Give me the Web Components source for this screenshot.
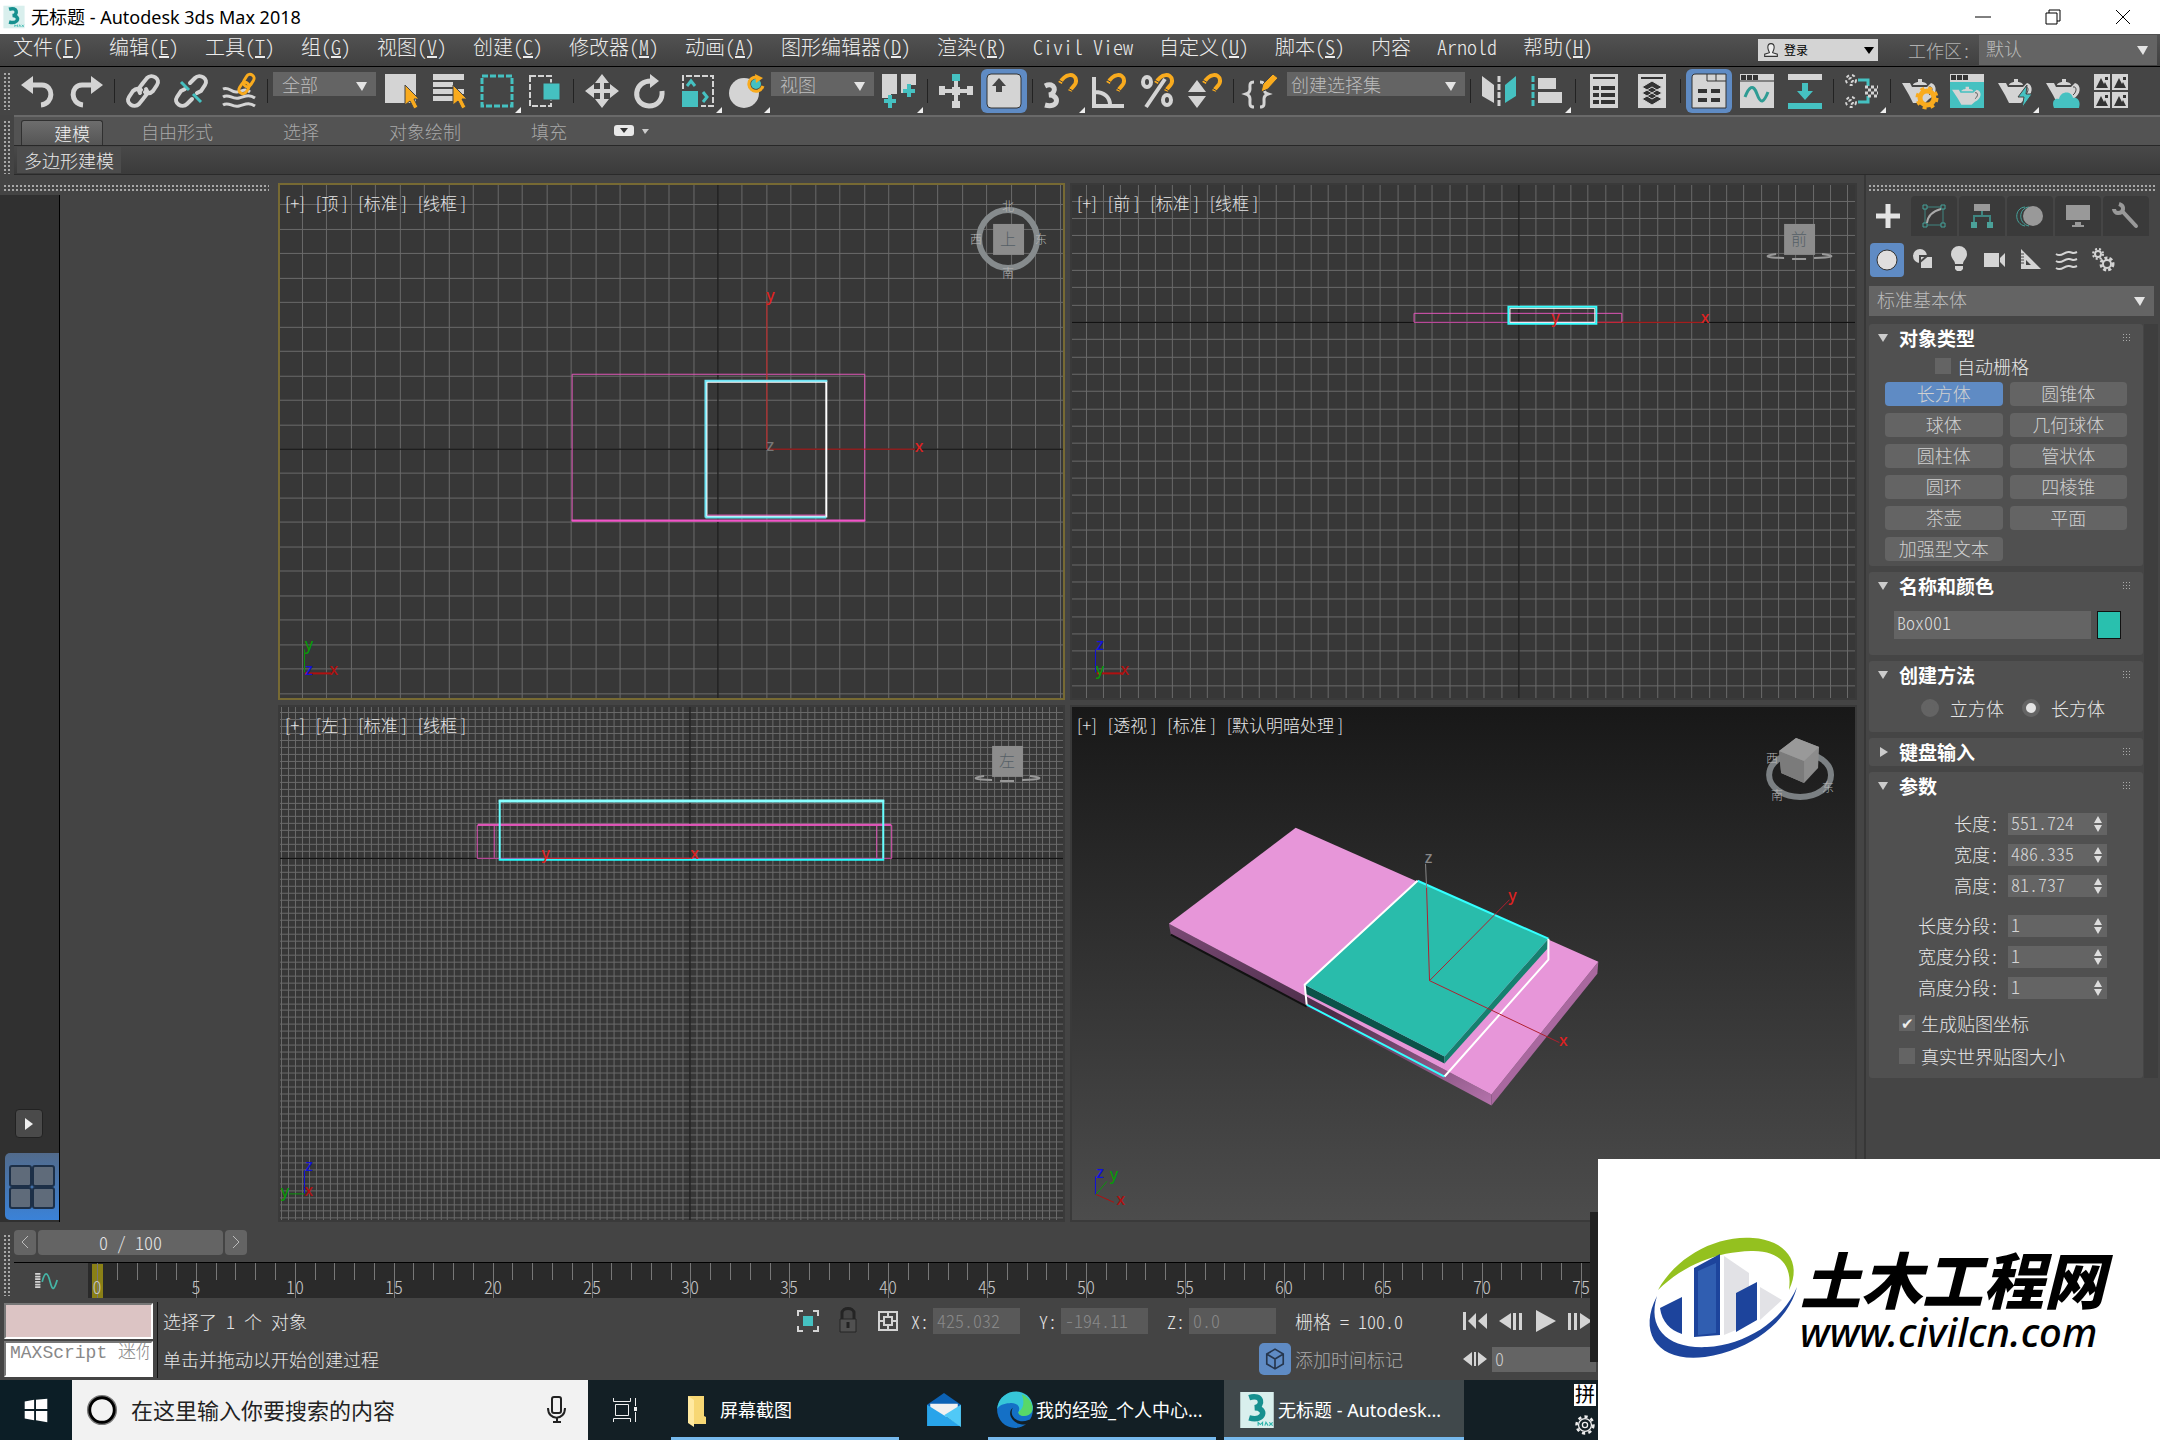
<!DOCTYPE html>
<html lang="zh-CN">
<head>
<meta charset="utf-8">
<title>无标题 - Autodesk 3ds Max 2018</title>
<style>
  :root {
    --font-ui: "Noto Sans CJK SC", sans-serif;
    --font-win: "Noto Sans", "Noto Sans CJK SC", sans-serif;
    --bg: #444;
    --field: #646464;
    --blue: #5f8bc4;
  }

  body {
    margin: 0;
    min-height: 100vh;
    display: flex;
    flex-direction: column;
    background: var(--bg);
    color: #e6e6e6;
    font-family: var(--font-ui);
    font-size: 18px;
    font-weight: 300;
    line-height: 24px;
  }

  main {
    flex: 1;
    display: flex;
  }
</style>
</head>
<body>
  <title-bar>无标题 - Autodesk 3ds Max 2018</title-bar>
  <menu-bar></menu-bar>
  <tool-bar></tool-bar>
  <ribbon-bar></ribbon-bar>
  <main>
    <layout-strip></layout-strip>
    <view-grid></view-grid>
    <command-panel></command-panel>
  </main>
  <time-line></time-line>
  <status-bar></status-bar>
  <task-bar></task-bar>
  <site-mark></site-mark>

<script>
const ICONS = {
  undo: `<path fill="none" stroke="#d4d4d4" stroke-width="5" d="M8 11h13c12 0 12 19-1 20"/><path fill="#d4d4d4" d="M0 11 12 2v18z"/>`,
  redo: `<path fill="none" stroke="#d4d4d4" stroke-width="5" d="M26 11H13C1 11 1 30 14 31"/><path fill="#d4d4d4" d="M34 11 22 2v18z"/>`,
  link: `<g fill="none" stroke="#d4d4d4" stroke-width="4" stroke-linecap="round"><path d="m14 19c-3-4 0-6 3-10l4-5c5-5 14 1 10 7l-4 6c-2 2-5 3-8 1"/><path d="m20 15c3 4 0 6-3 10l-4 5C8 35-1 29 3 23l4-6c2-2 5-3 8-1"/></g>`,
  unlink: `<g fill="none" stroke="#d4d4d4" stroke-width="4" stroke-linecap="round"><path d="m16 9 5-5c5-5 14 1 10 7l-4 6-4 2"/><path d="m18 25-5 5C8 35-1 29 3 23l4-6 4-2"/></g><path stroke="#45c1c1" stroke-width="3" d="m7 8 8 8m4 4 8 8"/>`,
  bind: `<g fill="none" stroke="#d4d4d4" stroke-width="3"><path d="M1 15c6-3 8 4 14 3s8-4 13 0"/><path d="M1 23c6-4 9 3 16 1s10-4 16 0"/><path d="M1 31c6-4 9 3 16 1s10-4 16 0"/></g><g fill="none" stroke="#f9ab1e" stroke-width="3"><rect x="23" y="0" width="8" height="13" rx="4" transform="rotate(32 27 6)"/><rect x="18" y="8" width="8" height="12" rx="4" transform="rotate(32 22 14)"/></g>`,
  select: `<path fill="#d4d4d4" d="M1 0h31v29H1z"/><path fill="#f9ab1e" stroke="#444" d="M21 11v20l5-4 4 8 4-2-4-8h5z"/>`,
  byname: `<path fill="#d4d4d4" d="M1 0h31v6H1zM1 8h20v5H1zM1 15h31v5H1zM1 22h20v5H1z"/><path fill="#f9ab1e" stroke="#444" d="M21 11v20l5-4 4 8 4-2-4-8h5z"/>`,
  region: `<rect x="2" y="2" width="30" height="30" fill="none" stroke="#45c1c1" stroke-width="3" stroke-dasharray="6 2"/>`,
  crossing: `<rect x="2" y="2" width="21" height="30" fill="none" stroke="#d4d4d4" stroke-width="2" stroke-dasharray="6 2"/><path fill="#45c1c1" stroke="#444" d="M15 9h17v17H15z"/>`,
  move: `<path fill="#d4d4d4" d="m17 0 7 9h-5v6h6v-5l9 7-9 7v-5h-6v6h5l-7 9-7-9h5v-6H9v5l-9-7 9-7v5h6V9h-5z"/>`,
  rotate: `<path fill="none" stroke="#d4d4d4" stroke-width="5" d="M20 7c-20-2-22 24-4 25 8 0 14-6 13-15"/><path fill="#d4d4d4" d="m17 0 9 7-9 7z"/>`,
  scale: `<path fill="none" stroke="#d4d4d4" stroke-width="2" stroke-dasharray="6 2" d="M2 15V2h30v30H20"/><path fill="#45c1c1" d="M1 17h16v16H1z"/><path fill="none" stroke="#45c1c1" stroke-width="3" d="m6 12 4-5 4 5m8 6 4 5-4 5"/>`,
  place: `<circle cx="15" cy="19" r="15" fill="#d4d4d4"/><circle cx="27" cy="10" r="8" fill="#444"/><circle cx="27" cy="10" r="5" fill="#45c1c1"/><path fill="none" stroke="#f9ab1e" stroke-width="3" d="M28 3c-12 0-10 16 1 14 3-1 4-2 5-5"/><path fill="#f9ab1e" d="m26 0 8 4-7 5z"/>`,
  pivot: `<path fill="#d4d4d4" d="M0 0h15v20H9v4H0zM19 0h15v11h-8v8h-7z"/><path stroke="#45c1c1" stroke-width="4" d="M8 21v13M2 27h12M27 10v13M21 17h12"/>`,
  manipulate: `<path stroke="#d4d4d4" stroke-width="4" d="M1 17h32M17 6v26"/><path fill="#45c1c1" d="M13 0h8v7h-8z"/><path fill="#d4d4d4" d="M0 12h6v9H0zM28 12h6v9h-6zM13 27h8v7h-8zM13 13h8v8h-8z"/>`,
  keyboard: `<rect x="0" y="0" width="34" height="34" rx="4" fill="#d4d4d4" stroke="#333"/><path fill="#444" d="m12 4 7 8h-4v6H9v-6H5z"/>`,
  snap3: `<path fill="none" stroke="#d4d4d4" stroke-width="5" d="M1 12c10-5 13 7 4 9 11 0 10 14-4 10"/>MAG`,
  angle: `<path fill="none" stroke="#d4d4d4" stroke-width="4" d="M2 3v29h30M3 18c9 0 15 5 15 13"/>MAG`,
  percent: `<path fill="none" stroke="#d4d4d4" stroke-width="4" d="M6 33 25 5M3 8a4 5 0 1 0 8 0 4 5 0 1 0-8 0M23 26a4 5 0 1 0 8 0 4 5 0 1 0-8 0"/>MAG`,
  spinner: `<path fill="#d4d4d4" d="m9 6 9 12H0zM0 22h18L9 34z"/>MAG`,
  braces: `<path fill="none" stroke="#d4d4d4" stroke-width="3" d="M9 8c-5 0-4 3-4 7 0 3-1 4-4 5 3 1 4 2 4 5 0 5-1 8 4 8M15 8c5 0 4 3 4 7 0 3 1 4 4 5-3 1-4 2-4 5 0 5 1 8-4 8"/><path fill="#f9ab1e" stroke="#444" d="m16 18 2-8L28 0l5 4-10 11z"/>`,
  mirror: `<path fill="#d4d4d4" d="m0 2 12 9v18L0 22z"/><path fill="#45c1c1" d="m34 2-11 9v18l11-7z"/><path stroke="#d4d4d4" stroke-width="3" stroke-dasharray="6 2" d="M17 2v30"/>`,
  align: `<path stroke="#45c1c1" stroke-width="3" stroke-dasharray="6 2" d="M3 2v30"/><path fill="#d4d4d4" d="M8 4h18v11H8zM8 18h24v11H8z"/>`,
  list: `<path fill="#d4d4d4" d="M3 0h28v34H3z"/><path stroke="#333" stroke-width="2" d="M6 4h22"/><path stroke="#333" stroke-width="4" d="M6 14h6m2 0h14M6 21h6m2 0h14M6 28h6m2 0h14"/>`,
  layers: `<path fill="#d4d4d4" d="M3 0h28v34H3z"/><path stroke="#333" stroke-width="2" d="M6 4h22"/><path fill="#333" stroke="#d4d4d4" d="m7 25 10-6 10 6-10 6zM7 19l10-6 10 6-10 6zM7 13l10-6 10 6-10 6z"/>`,
  ribbon: `<path fill="#d4d4d4" stroke="#333" d="M0 4c0-3 1-4 4-4h30v34H0z"/><path fill="none" stroke="#333" d="M15 0v7h19M24 0v7"/><path fill="#333" d="M6 15h9v4H6zM19 15h9v4h-9zM6 24h9v4H6zM19 24h9v4h-9z"/>`,
  curve: `<path fill="#d4d4d4" d="M0 0h34v34H0z"/><path stroke="#333" d="M0 7h34"/><path fill="#333" d="M1 1h5v5H1zM7 1h5v5H7zM13 1h5v5h-5z"/><path fill="none" stroke="#2f9c94" stroke-width="3" d="M5 23c4-10 8-14 12-3s7 8 11-2"/>`,
  dope: `<path fill="#d4d4d4" d="M0 0h34v6H0z"/><path fill="#45c1c1" d="M0 29h34v6H0zM14 9h6v8h5l-8 9-8-9h5z"/>`,
  schematic: `<path fill="none" stroke="#45c1c1" stroke-width="3" d="M13 6h10v6M13 28h10v-6"/><g fill="none" stroke="#d4d4d4" stroke-width="2" stroke-dasharray="3 3"><circle cx="6" cy="6" r="5"/><circle cx="6" cy="6" r="2"/><circle cx="6" cy="28" r="5"/><circle cx="6" cy="28" r="2"/></g><path stroke="#d4d4d4" stroke-width="3" stroke-dasharray="3 3" d="M20 13h13M23 16h11M20 19h13M23 22h11"/>`,
  pot: `<path fill="#d4d4d4" d="M0 9h8l2 4h15l4-4c7 2 6 12-2 16l-4 4H11L7 21zM11 11c0-2 4-3 5-3V5h4v3c2 0 5 1 5 3z"/><path fill="none" stroke="#444" d="m27 13c4-1 4 5 0 8"/>`,
  potgear: `POT<circle cx="25" cy="24" r="7" fill="none" stroke="#f9ab1e" stroke-width="5"/><circle cx="25" cy="24" r="10" fill="none" stroke="#f9ab1e" stroke-width="3" stroke-dasharray="4 4"/>`,
  potframe: `<path fill="#45c1c1" d="M0 0h34v34H0z"/><path fill="#d4d4d4" d="M0 0h34v8H0z"/><path fill="#333" d="M1 1h5v5H1zM7 1h5v5H7zM13 1h5v5h-5z"/><g transform="translate(2 9) scale(.85 .75)">POT</g>`,
  potbolt: `POT<path fill="#45c1c1" stroke="#444" d="m29 11-9 12h6l-2 11 10-14h-6z"/>`,
  potcloud: `POT<path fill="#45c1c1" d="M8 34c-3-8 2-10 5-9 2-9 13-8 14-1 5-1 8 4 6 10z"/>`,
  thumbs: `<path fill="#d4d4d4" d="M0 0h16v16H0zM18 0h16v16H18zM0 18h16v16H0zM18 18h16v16H18z"/><path fill="#333" d="m2 14 5-10 3 6 1-2 3 6zM20 14l5-10 3 6 1-2 3 6zM2 32l5-10 3 6 1-2 3 6zM20 32l5-10 3 6 1-2 3 6zM11 3h3v3h-3zM29 3h3v3h-3zM11 21h3v3h-3zM29 21h3v3h-3z"/>`,
  plus: `<path stroke="#e4e4e4" stroke-width="5" d="M17 5v24M5 17h24"/>`,
  modify: `<path fill="none" stroke="#3f8580" stroke-width="1" d="M8 8h18v18H8z"/><path fill="#3b3b3b" stroke="#45a39b" d="M6 6h4v4H6zM24 6h4v4h-4zM6 24h4v4H6zM24 24h4v4h-4z"/><path fill="none" stroke="#aaa" stroke-width="2" d="M10 24c1-8 6-12 14-14"/>`,
  hierarchy: `<path fill="#999" d="M9 5h16v7H9z"/><path fill="none" stroke="#3f8580" stroke-width="2" d="M17 12v5M9 23v-6h16v6"/><path fill="#4ba199" d="M6 23h6v6H6zM22 23h6v6h-6z"/>`,
  motion: `<path fill="none" stroke="#45a39b" d="M12 8c-11 1-11 17 0 19M16 8C5 9 5 25 16 27"/><circle cx="20" cy="17" r="10" fill="#999"/>`,
  display: `<path fill="#999" d="M5 6h24v15H5zM14 23h6v3h3v2H11v-2h3z"/>`,
  wrench: `<path fill="none" stroke="#999" stroke-width="4" stroke-linecap="round" d="m14 13 13 14"/><path fill="none" stroke="#999" stroke-width="4" d="M10 5c6 2 5 9-1 9-2 0-4-2-4-4"/>`,
  sphere: `<circle cx="17" cy="17" r="10" fill="#e0dede" stroke="#333"/>`,
  shapes: `<circle cx="14" cy="13" r="7" fill="#d4d4d4"/><path fill="#d4d4d4" stroke="#444" stroke-width="2" d="M14 13h13v13H14z"/><path stroke="#444" stroke-width="2" d="m14 19 7-6"/>`,
  bulb: `<path fill="#d4d4d4" d="M13 21c0-4-4-5-4-10a8 8 0 0 1 16 0c0 5-4 6-4 10zM13 23h8v3l-2 2h-4l-2-2z"/>`,
  camera: `<path fill="#d4d4d4" d="M6 10h15v14H6zM22 15l5-5v14l-5-5z"/>`,
  helper: `<path fill="#d4d4d4" fill-rule="evenodd" d="m7 6 20 20H7zM12 17v5h5z"/><path stroke="#444" stroke-width="1" d="M7 11h3M7 14h3M7 17h3M7 20h3"/>`,
  waves: `<path fill="none" stroke="#d4d4d4" stroke-width="2" d="M6 11c6 4 8-3 13-2s4 2 8 0M6 18c6 4 8-3 13-2s4 2 8 0M6 25c6 4 8-3 13-2s4 2 8 0"/>`,
  gears: `<g fill="none" stroke="#d4d4d4"><circle cx="12" cy="11" r="3" stroke-width="2"/><circle cx="12" cy="11" r="5" stroke-width="2" stroke-dasharray="2 2"/><circle cx="21" cy="21" r="4" stroke-width="2"/><circle cx="21" cy="21" r="6" stroke-width="3" stroke-dasharray="3 2"/></g>`,
  max: `<path fill="#d9efed" d="M2 1h30v32H2z"/><path fill="none" stroke="#16908f" stroke-width="5" d="M10 6c12-4 13 8 5 9 11 0 9 13-5 9"/><path fill="none" stroke="#2cb4aa" stroke-width="1" d="M18 31v-3l2 2 2-2v3m2 0 1-3 2 3m1-3 3 3m0-3-3 3"/>`,
  isolate: `<path fill="none" stroke="#d4d4d4" stroke-width="2" d="M7 12V7h5m10 0h5v5m0 10v5h-5m-10 0H7v-5"/><path fill="#45c1c1" d="M12 12h10v10H12z"/>`,
  lock: `<path fill="none" stroke="#242424" stroke-width="3" d="M11 15V9c0-6 12-6 12 0v6"/><path fill="#505050" stroke="#242424" d="M9 15h16v13H9z"/><path stroke="#222" stroke-width="3" d="M17 18v6"/>`,
  absolute: `<path fill="none" stroke="#d4d4d4" stroke-width="2" d="M8 8h18v18H8zM17 8v5m0 8v5M8 17h5m8 0h5M13 13h8v8h-8z"/>`,
  cube: `<path fill="none" stroke="#26364d" stroke-width="2" d="m17 5 10 6v12l-10 6-10-6V11zM7 11l10 6 10-6M17 17v12"/>`,
  first: `<path fill="#d4d4d4" d="M5 8h3v18H5zM18 9v16l-8-8zM29 9v16l-9-8z"/>`,
  prev: `<path fill="#d4d4d4" d="M18 9v16L6 17zM20 9h3v17h-3zM26 9h3v17h-3z"/>`,
  play: `<path fill="#d4d4d4" d="m8 6 20 11L8 28z"/>`,
  next: `<path fill="#d4d4d4" d="M5 9h3v17H5zM11 9h3v17h-3zM17 9l12 8-12 8z"/>`,
  keymode: `<path fill="#d4d4d4" d="m5 17 9-7v14zM29 17l-9-7v14zM16 10h2v14h-2z"/>`,
  keys: `<path stroke="#d4d4d4" stroke-width="6" stroke-dasharray="2 1" d="M2 8v18"/><path fill="none" stroke="#45b5a6" stroke-width="2" d="M7 18c3-12 6-12 9 0s5 8 8-2"/>`,
  win: `<path fill="#fff" d="m5 8 10-2v10H5zM17 6l12-1v11H17zM5 18h10v10L5 26zM17 18h12v12l-12-2z"/>`,
  ring: `<circle cx="17" cy="17" r="14" fill="none" stroke="#777" stroke-width="4"/><circle cx="17" cy="17" r="13" fill="none" stroke="#000" stroke-width="3"/>`,
  mic: `<rect x="12" y="4" width="9" height="16" rx="2" fill="none" stroke="#222" stroke-width="2"/><path fill="none" stroke="#222" stroke-width="2" d="M8 15c0 13 17 13 17 0M17 25v4m-4 0h8"/>`,
  taskview: `<g fill="none" stroke="#eee" stroke-width="1"><path d="M7.500 11.500h13v11h-13zM5.500 5v3.500h17V5M5.500 29v-3.500h17V29M27.500 5v8m0 6v10"/></g><path fill="#eee" d="M26 14h3v4h-3z"/>`,
  folder: `<path fill="#f7d774" d="M9 3h16v20l2 1v7H14z"/><path fill="#ffe9a0" d="m9 3 6 4v27l-6-4z"/>`,
  mail: `<path fill="#0c62b5" d="m1 12 16-11 16 11v5H1z"/><path fill="#f1f1f1" d="M4 11h26v6L17 25 4 17z"/><path fill="#28a4ea" d="m1 12 32 20H1z"/><path fill="#50c9f7" d="M33 12v21L17 22z"/>`,
  edge: `<circle cx="17" cy="17" r="16" fill="#1470c6"/><path fill="#36c6d8" d="M1 16C3-4 31-5 33 14c0 9-12 10-13 5 3-6-3-9-8-8-5 0-9 2-11 5z"/><path fill="#58d868" d="M23 3c9 4 11 12 9 16-4 5-12 4-12 0 6-4 5-11 3-16z"/><path fill="#131f25" d="M15 15c-4 8 5 15 14 11l3-1-5 5c-12 1-18-10-12-15z"/>`,
  gear: `<circle cx="17" cy="17" r="4" fill="none" stroke="#eee" stroke-width="2"/><circle cx="17" cy="17" r="10" fill="none" stroke="#eee" stroke-width="2"/><circle cx="17" cy="17" r="13" fill="none" stroke="#eee" stroke-width="4" stroke-dasharray="5 5"/>`,
  user: `<path fill="#eee" stroke="#333" stroke-width="2" d="M11 12a6 7 0 0 1 12 0c0 5-3 8-3 10l9 3v4H5v-4l9-3c0-2-3-5-3-10z"/>`
};

const MAGNET = `<path fill="none" stroke="#f9ab1e" stroke-width="4" d="M16 9c5-10 15-10 16-3 1 5-4 6-6 11"/><path stroke="#444" stroke-width="1" d="m15 6 5 3m4 5 5 3"/>`;

const icon = (name, size = 34) =>
  `<svg viewBox="0 0 34 34" width="${size}" height="${size}" aria-hidden="true">${ICONS[name]
    .replace("MAG", MAGNET)
    .replace("POT", ICONS.pot)}</svg>`;

// shared by every shadow root
const RESET = `
  :host, * { box-sizing: border-box; }
  svg { display: block; flex: none; overflow: visible; }
  button, input, select {
    margin: 0; padding: 0; border: 0; border-radius: 0;
    font: inherit; color: inherit; background: none;
    appearance: none; outline: none;
  }
  button { display: flex; align-items: center; justify-content: center; }
  .half { font-feature-settings: "hwid"; }
  .dots { background: radial-gradient(#a8a8a8 1px, transparent 1px) 0 0 / 4px 4px; }
`;

class BaseElement extends HTMLElement {
  constructor() {
    super();
    this.attachShadow({ mode: "open" });
  }

  connectedCallback() {
    this.shadowRoot.innerHTML = `<style>${RESET}${this.css()}</style>${this.html()}`;
  }
}

class TitleBar extends BaseElement {
  css() {
    return `
      :host { display: flex; align-items: center; height: 34px; padding: 0 2px; background: #fff; color: #000; font-family: var(--font-win); font-weight: 400; }
      h1 { flex: 1; margin: 0 0 0 5px; font-size: 18px; font-weight: 400; }
      button { width: 70px; height: 34px; }
      button path, button rect { fill: none; stroke: #000; }
    `;
  }

  html() {
    return `
      ${icon("max", 24)}
      <h1><slot></slot></h1>
      <button aria-label="最小化"><svg width="16" height="16"><path d="M0 8h16"/></svg></button>
      <button aria-label="还原"><svg width="16" height="16"><path d="M1 4h11v11H1zM4 4V1h11v11h-3"/></svg></button>
      <button aria-label="关闭"><svg width="16" height="16"><path d="m1 1 14 14m0-14L1 15"/></svg></button>
    `;
  }
}

class DropDown extends BaseElement {
  css() {
    return `
      :host { display: grid; align-items: center; height: 24px; background: var(--field); color: #bcbcbc; }
      select, svg { grid-area: 1 / 1; }
      select { width: 100%; height: 100%; padding: 0 0 4px var(--inset, 9px); font-weight: 300; }
      svg { justify-self: end; margin-right: 9px; fill: #e4e4e4; pointer-events: none; }
    `;
  }

  html() {
    return `
      <select class="half" aria-label="${this.getAttribute("label")}"><option>${this.getAttribute("value")}</option></select>
      <svg width="11" height="9"><path d="M0 0h11L6 9z"/></svg>
    `;
  }
}

class MenuBar extends BaseElement {
  css() {
    return `
      :host { display: flex; justify-content: space-between; height: 33px; padding-right: 3px; border-bottom: 1px solid #000; background: linear-gradient(#525252, #404040); }
      nav { display: flex; gap: 26px; padding-left: 13px; font-size: 20px; line-height: 26px; }
      a { color: #ececec; text-decoration: none; white-space: nowrap; }
      .tools { display: flex; align-items: center; gap: 8px; color: #b0b0b0; }
      .login { display: flex; align-items: center; gap: 4px; width: 120px; height: 22px; margin-right: 22px; padding-left: 4px; background: #d4d4d4; color: #000; font-size: 12px; font-weight: 400; }
      .login select { flex: 1; }
      .workspace { width: 178px; height: 30px; --inset: 7px; }
    `;
  }

  html() {
    const items = ["文件(F)", "编辑(E)", "工具(T)", "组(G)", "视图(V)", "创建(C)", "修改器(M)", "动画(A)", "图形编辑器(D)", "渲染(R)", "Civil View", "自定义(U)", "脚本(S)", "内容", "Arnold", "帮助(H)"];
    const links = items.map(t => `<a href="#">${t.replace(/\((.)\)/, "(<u>$1</u>)")}</a>`).join("");
    return `
      <nav class="half">${links}</nav>
      <div class="tools">
        <div class="login">${icon("user", 18)}<select aria-label="登录"><option>登录</option></select><svg width="14" height="7"><path d="M0 0h10L5 7z"/></svg></div>
        <span class="half">工作区:</span>
        <drop-down class="workspace" label="工作区" value="默认"></drop-down>
      </div>
    `;
  }
}

class ToolBar extends BaseElement {
  css() {
    return `
      :host { display: flex; height: 48px; align-items: center; background: #454545; }
      .dots { width: 7px; height: 38px; margin: 0 4px 0 3px; }
      button { position: relative; width: 48px; height: 44px; }
      button.on { width: 46px; margin: 0 1px; border-radius: 6px; background: var(--blue); }
      button.more::after { content: ""; position: absolute; right: 0; bottom: 0; border: 3px solid transparent; border-right-color: #eee; border-bottom-color: #eee; }
      hr { width: 1px; height: 24px; margin: 0 4px; border: 0; background: #222; }
      drop-down { width: 103px; align-self: flex-start; margin: 5px 1px 0; }
      drop-down.wide { width: 178px; --inset: 4px; }
    `;
  }

  html() {
    const row = "undo redo | link unlink bind | 全部 select byname region+ crossing | move rotate scale+ place+ 视图 pivot+ | manipulate keyboard! | snap3+ angle percent spinner | braces 创建选择集 | mirror align+ | list layers | ribbon! curve dope | schematic+ | potgear potframe potbolt+ potcloud thumbs";
    return `<div class="dots"></div>` + row.split(" ").map(t => {
      if (t === "|") return "<hr>";
      if (!/^\w/.test(t)) return `<drop-down class="${t.length > 2 ? "wide" : ""}" label="${t}" value="${t}"></drop-down>`;
      const name = t.replace(/[+!]/, "");
      return `<button class="${t.endsWith("+") ? "more" : t.endsWith("!") ? "on" : ""}" aria-label="${name}">${icon(name)}</button>`;
    }).join("");
  }
}

class RibbonBar extends BaseElement {
  css() {
    return `
      :host { display: flex; height: 60px; }
      .dots { width: 7px; height: 54px; margin: 5px 4px 0 3px; }
      .body { flex: 1; border-top: 2px solid #696969; }
      .tabs { display: flex; align-items: center; gap: 70px; height: 29px; padding-left: 7px; border-bottom: 1px solid #282828; background: #535353; }
      button { height: 28px; color: #a8a8a8; font-weight: 300; }
      .tabs .on { width: 82px; height: 25px; align-self: flex-end; justify-content: flex-end; padding-right: 12px; margin-right: -32px; border: 1px solid #303030; border-bottom: 0; border-radius: 3px 3px 0 0; background: linear-gradient(#6d6d6d, #555); color: #f0f0f0; }
      .tabs svg { margin-left: -23px; }
      .panel { height: 29px; padding: 1px 3px; border-bottom: 1px solid #2a2a2a; background: linear-gradient(#494949, #3b3b3b); }
      .panel button { width: 104px; height: 26px; background: #4c4c4c; color: #e8e8e8; }
    `;
  }

  html() {
    return `
      <div class="dots"></div>
      <div class="body">
        <div class="tabs">
          <button class="on">建模</button><button>自由形式</button><button>选择</button><button>对象绘制</button><button>填充</button>
          <svg width="36" height="12"><rect width="20" height="11" rx="3" fill="#e8e8e8"/><path fill="#333" d="M6 3h8l-4 5z"/><path fill="#ccc" d="M28 4h7l-4 5z"/></svg>
        </div>
        <div class="panel"><button>多边形建模</button></div>
      </div>
    `;
  }
}

class LayoutStrip extends BaseElement {
  css() {
    return `
      :host { display: flex; flex-direction: column; width: 278px; padding-top: 9px; }
      .dots { height: 8px; margin: 0 9px 3px 3px; }
      .strip { flex: 1; display: flex; flex-direction: column; align-items: flex-end; justify-content: flex-end; gap: 15px; width: 60px; padding-bottom: 2px; border-right: 1px solid #000; background: #303030; }
      .play { width: 28px; height: 29px; margin-right: 16px; border: 1px solid #222; border-radius: 4px; background: #4a4a4a; }
      .quad { width: 54px; height: 67px; border-radius: 5px 0 0 5px; background: linear-gradient(#526b8c, #3a82d8); }
    `;
  }

  html() {
    return `
      <div class="dots"></div>
      <div class="strip">
        <button class="play" aria-label="展开"><svg width="8" height="12"><path fill="#eee" d="m0 0 8 6-8 6z"/></svg></button>
        <button class="quad" aria-label="四视图"><svg width="46" height="44"><g fill="#5f6b7a" stroke="#1d3048" stroke-width="2"><rect x="1" y="1" width="21" height="20" rx="2"/><rect x="24" y="1" width="21" height="20" rx="2"/><rect x="1" y="23" width="21" height="20" rx="2"/><rect x="24" y="23" width="21" height="20" rx="2"/></g></svg></button>
      </div>
    `;
  }
}

// Lines of a home grid through the world origin (ox, oy).
function gridLines(ox, oy, step, width, height) {
  let d = "";
  for (let i = -Math.floor(ox / step); ox + i * step < width; i++) d += `M${Math.round(ox + i * step)} 0V${height}`;
  for (let i = -Math.floor(oy / step); oy + i * step < height; i++) d += `M0 ${Math.round(oy + i * step)}H${width}`;
  return `<g transform="translate(.5 .5)"><path stroke="#6a6a6a" d="${d}"/><path stroke="#000" d="M${Math.round(ox)} 0V${height}M0 ${Math.round(oy)}H${width}"/></g>`;
}

const axis = (letter, x, y, color) => `<text x="${x}" y="${y}" fill="${color}">${letter}</text>`;

const flatCube = label => `
  <path fill="none" stroke="#999" stroke-width="2" d="M707 71c-14 2-10 4 8 4m8 1h14m8-1c18 0 24-2 8-4"/>
  <path fill="#8c8c8c" d="M715 41h31v31h-31z"/><text class="cube" x="730" y="62">${label}</text>`;

const SCENES = {
  top: `${gridLines(440, 266, 24.47, 788, 518)}
    <g fill="none">
      <path stroke="#e055b8" d="M294.5 191.5h293v147h-293z"/><path stroke="#f055c8" stroke-width="2" d="M294 338h294"/>
      <path stroke="#c82020" d="M489.5 118v148.5H638"/>
      <path stroke="#fff" stroke-width="2" d="M429 199h120v135H429z"/><path stroke="#6fe4f4" stroke-width="2" d="M428 335V198h122M428 335h121"/>
      <path stroke="#e055b8" d="M430 332.5h118"/>
      <path stroke="#0a960a" d="M26.5 467v23"/><path stroke="#b01010" stroke-width="2" d="M27 491h26"/>
    </g>
    ${axis("y", 493, 118, "#d22")}${axis("x", 642, 269, "#d22")}${axis("z", 493, 268, "#777")}
    ${axis("y", 31, 468, "#0a960a")}${axis("z", 31, 493, "#11d")}${axis("x", 56, 493, "#b01010")}
    <circle cx="731" cy="56" r="29" fill="none" stroke="#868b8d" stroke-width="6"/>
    <path fill="#8c8c8c" d="M716 41h31v31h-31z"/><text class="cube" x="731" y="62">上</text>
    <g class="compass"><text x="731" y="28">北</text><text x="731" y="95">南</text><text x="699" y="61">西</text><text x="764" y="61">东</text></g>`,
  front: `${gridLines(449, 139, 17.33, 788, 518)}
    <g fill="none">
      <path stroke="#e055b8" d="M344.5 130.5h208v9h-208z"/><path stroke="#c82020" d="M526 139.5h109"/>
      <path stroke="#3ff" stroke-width="2" d="M439 124h88v17h-88z"/><path stroke="#fff" d="M440.5 125.5h85v14h-85z"/>
      <path stroke="#11d" d="M25.5 467v23"/><path stroke="#b01010" stroke-width="2" d="M27 491h26"/>
    </g>
    ${axis("y", 486, 140, "#d22")}${axis("x", 636, 140, "#d22")}
    ${axis("z", 30, 468, "#11d")}${axis("y", 30, 493, "#0a960a")}${axis("x", 55, 493, "#b01010")}
    ${flatCube("前")}`,
  left: `${gridLines(412, 153, 6.93, 788, 518)}
    <g fill="none">
      <path stroke="#e055b8" d="M199.5 120.5h415v33h-415zM216.5 120v33M599.5 120v33"/><path stroke="#e055b8" stroke-width="2" d="M200 120h414"/>
      <path stroke="#6ff" stroke-width="2" d="M222 154V96h384v58"/><path stroke="#8ff" stroke-width="3" d="M221 96h386"/><path stroke="#2ff" stroke-width="2" d="M221 155h386"/>
      <path stroke="#c82020" d="M268 153.5h145"/>
      <path stroke="#11d" d="M26.5 466v23"/><path stroke="#0a960a" d="M11 489.5h15"/>
    </g>
    ${axis("y", 268, 154, "#d22")}${axis("x", 417, 154, "#d22")}
    ${axis("z", 31, 467, "#11d")}${axis("y", 7, 493, "#0a960a")}${axis("x", 31, 492, "#b01010")}
    ${flatCube("左")}`,
  persp: `
    <defs><linearGradient id="side" x2="1" y2="1"><stop stop-color="#7a4a75"/><stop offset=".5" stop-color="#4a2c47"/><stop offset="1" stop-color="#b573ac"/></linearGradient></defs>
    <path fill="url(#side)" d="m99 219 2 11 321 171V390z"/><path fill="none" stroke="#111" stroke-width="2" d="m101 230 136 72"/>
    <path fill="#a9689f" d="m422 390 107-133-1 12-106 132z"/>
    <path fill="#e796d9" d="m226 123 303 134-107 133L99 219z"/>
    <path fill="#0b5248" d="m235 280 1 9 139 70v-7z"/><path fill="#15806f" d="m375 352 104-118-1 10-103 115z"/>
    <path fill="#29bcab" d="m348 176 131 58-104 118-140-72z"/>
    <g fill="none">
      <path stroke="#3ff" stroke-width="2" d="m348 176 131 58M237 300l138 72"/>
      <path stroke="#fff" stroke-width="2" d="m348 176-113 104 2 20M479 234v21L375 372"/>
      <path stroke="#888" d="m356 159 1 24"/><path stroke="#b02030" d="m357 183 3 93 80-81M360 276l130 62"/>
      <path stroke="#11d" d="M25.5 472v18"/><path stroke="#0a960a" d="m26 490 11-13"/><path stroke="#b01010" d="m26 490 18 8"/>
    </g>
    ${axis("z", 359, 158, "#888")}${axis("y", 443, 196, "#d22")}${axis("x", 494, 341, "#d22")}
    ${axis("z", 30, 474, "#11d")}${axis("y", 44, 476, "#0a960a")}${axis("x", 51, 501, "#b01010")}
    <ellipse cx="731" cy="70" rx="31" ry="22" fill="none" stroke="#7b8083" stroke-width="6"/>
    <path fill="#8c8c8c" d="m727 33 23 9-1 21-14 15-23-10-2-22z"/><path fill="#7b7b7b" d="m710 46 25 10v22l-23-10z"/><path fill="#999" d="m727 33 23 9-15 14-25-10z"/>
    <g class="compass"><text x="703" y="58">西</text><text x="708" y="95">南</text><text x="759" y="87">东</text></g>`
};

class ViewPort extends BaseElement {
  css() {
    return `
      :host { position: relative; display: block; overflow: hidden; background: #373737; border: 2px solid #3a3a3a; }
      :host([active]) { border-color: #776a33; }
      :host([scene="persp"]) { background: linear-gradient(#181818, #4c4c4c); }
      svg { position: absolute; inset: -2px; width: calc(100% + 4px); height: calc(100% + 4px); }
      text { font: 500 16px "Noto Sans", sans-serif; text-anchor: middle; }
      .cube { font: 300 16px var(--font-ui); fill: #555f66; }
      .compass text { font: 300 12px var(--font-ui); fill: #b8b8b8; }
      .labels { position: relative; display: flex; gap: 11px; padding: 6px 5px; font-size: 17px; white-space: nowrap; }
    `;
  }

  html() {
    const labels = this.getAttribute("labels").split(",");
    return `
      <svg viewBox="0 0 788 518" preserveAspectRatio="xMinYMin slice">${SCENES[this.getAttribute("scene")]}</svg>
      <div class="labels"><span>[+]</span>${labels.map(t => `<span>[${t} ]</span>`).join("")}</div>
    `;
  }
}

class ViewGrid extends BaseElement {
  css() {
    return `:host { flex: 1; display: grid; grid-template: 1fr 1fr / 1fr 1fr; gap: 5px; padding: 8px 7px 0 0; }`;
  }

  html() {
    return `
      <view-port active scene="top" labels="顶,标准,线框"></view-port>
      <view-port scene="front" labels="前,标准,线框"></view-port>
      <view-port scene="left" labels="左,标准,线框"></view-port>
      <view-port scene="persp" labels="透视,标准,默认明暗处理"></view-port>
    `;
  }
}

class RollOut extends BaseElement {
  css() {
    return `
      :host { display: block; border-radius: 3px; background: #505050; }
      h2 { display: flex; align-items: center; gap: 10px; height: 28px; margin: 0; padding: 0 11px 1px 9px; color: #fff; font-size: 19px; font-weight: 700; }
      h2 span { flex: 1; }
      i { width: 10px; height: 10px; background: radial-gradient(#aaa 1px, transparent 1px) 0 0 / 3px 3px; }
    `;
  }

  html() {
    const arrow = this.hasAttribute("closed") ? "m2 1 8 5-8 5z" : "M0 2h10L5 10z";
    return `
      <h2><svg width="11" height="12"><path fill="#ccc" d="${arrow}"/></svg><span>${this.getAttribute("heading")}</span><i></i></h2>
      <slot></slot>
    `;
  }
}

class SpinField extends BaseElement {
  css() {
    return `
      :host { display: flex; align-items: center; justify-content: flex-end; gap: 9px; height: 22px; }
      label { padding-bottom: 2px; }
      .box { display: flex; align-items: center; width: 99px; height: 22px; padding: 0 5px 0 3px; background: var(--field); }
      input { flex: 1; min-width: 0; height: 22px; padding-bottom: 5px; color: #d4d4d4; }
    `;
  }

  html() {
    const label = this.getAttribute("label");
    return `
      <label class="half" for="value">${label}:</label>
      <span class="box"><input id="value" class="half" value="${this.getAttribute("value")}"><svg width="8" height="16"><path fill="#ddd" d="m4 0 4 7H0zM0 9h8l-4 7z"/></svg></span>
    `;
  }
}

class CommandPanel extends BaseElement {
  css() {
    return `
      :host { width: 296px; padding-top: 9px; border-left: 2px solid #373737; background: #454545; }
      .dots { height: 8px; margin: 0 4px 4px 2px; }
      .tabs { display: flex; gap: 2px; height: 40px; }
      .tabs button { width: 46px; border-radius: 4px 4px 0 0; background: #3a3a3a; }
      .tabs .on { width: 43px; background: none; }
      .kinds { display: flex; gap: 2px; padding: 7px 4px 9px; }
      .kinds button { width: 34px; height: 34px; border-radius: 4px; }
      .kinds .on { background: var(--blue); }
      drop-down { height: 30px; margin: 0 6px 8px 3px; --inset: 8px; }
      .stack { display: flex; flex-direction: column; gap: 6px; margin-right: 2px; padding: 0 15px 0 3px; background: linear-gradient(90deg, transparent 278px, #3e3e3e 278px); }
      label { display: flex; align-items: center; gap: 6px; white-space: nowrap; }
      input[type="checkbox"] { display: grid; place-items: center; width: 16px; height: 16px; background: var(--field); }
      input[type="checkbox"]:checked::after { content: "✔"; color: #eee; font-size: 15px; line-height: 16px; }
      input[type="radio"] { width: 18px; height: 18px; border: 4px solid var(--field); border-radius: 9px; background: var(--field); }
      input[type="radio"]:checked { background: #e4e4e4; }
      .auto { justify-content: center; height: 27px; padding-right: 48px; }
      .objects { display: grid; grid-template-columns: 1fr 1fr; gap: 7px; padding: 3px 16px 5px; }
      .objects button { height: 24px; padding-bottom: 2px; border-radius: 4px; background: var(--field); color: #d0d0d0; font-weight: 300; }
      .objects .on { background: var(--blue); }
      .name { display: flex; gap: 6px; padding: 11px 22px 16px 25px; }
      .name input { flex: 1; min-width: 0; height: 28px; padding: 0 0 6px 3px; background: var(--field); color: #ddd; }
      .name button { width: 24px; height: 28px; border: 1px solid #111; background: #29c0ae; }
      .method { display: flex; gap: 18px; height: 43px; padding: 0 0 5px 52px; }
      .method label { gap: 11px; }
      .params { display: flex; flex-direction: column; gap: 9px; padding: 13px 36px 12px 0; }
      .params .second { margin-top: 9px; }
      .maps { display: flex; flex-direction: column; gap: 9px; padding: 0 0 10px 30px; }
    `;
  }

  html() {
    const tabs = ["plus", "modify", "hierarchy", "motion", "display", "wrench"];
    const kinds = ["sphere", "shapes", "bulb", "camera", "helper", "waves", "gears"];
    const objects = ["长方体", "圆锥体", "球体", "几何球体", "圆柱体", "管状体", "圆环", "四棱锥", "茶壶", "平面", "加强型文本"];
    const on = i => (i ? "" : "on");
    return `
      <div class="dots"></div>
      <div class="tabs">${tabs.map((t, i) => `<button class="${on(i)}" aria-label="${t}">${icon(t)}</button>`).join("")}</div>
      <div class="kinds">${kinds.map((t, i) => `<button class="${on(i)}" aria-label="${t}">${icon(t)}</button>`).join("")}</div>
      <drop-down label="类别" value="标准基本体"></drop-down>
      <div class="stack">
        <roll-out heading="对象类型">
          <label class="auto"><input type="checkbox">自动栅格</label>
          <div class="objects">${objects.map((t, i) => `<button class="${on(i)}">${t}</button>`).join("")}</div>
        </roll-out>
        <roll-out heading="名称和颜色">
          <div class="name"><input class="half" aria-label="名称" value="Box001"><button aria-label="颜色"></button></div>
        </roll-out>
        <roll-out heading="创建方法">
          <div class="method"><label><input type="radio" name="method">立方体</label><label><input type="radio" name="method" checked>长方体</label></div>
        </roll-out>
        <roll-out heading="键盘输入" closed></roll-out>
        <roll-out heading="参数">
          <div class="params">
            <spin-field label="长度" value="551.724"></spin-field>
            <spin-field label="宽度" value="486.335"></spin-field>
            <spin-field label="高度" value="81.737"></spin-field>
            <spin-field class="second" label="长度分段" value="1"></spin-field>
            <spin-field label="宽度分段" value="1"></spin-field>
            <spin-field label="高度分段" value="1"></spin-field>
          </div>
          <div class="maps">
            <label><input type="checkbox" checked>生成贴图坐标</label>
            <label><input type="checkbox">真实世界贴图大小</label>
          </div>
        </roll-out>
      </div>
    `;
  }
}

class TimeLine extends BaseElement {
  css() {
    return `
      :host { display: flex; height: 76px; }
      .dots { width: 7px; height: 62px; margin: 12px 4px 0 3px; }
      .body { flex: 1; min-width: 0; }
      .slider { display: flex; gap: 2px; height: 40px; padding: 8px 0 7px; }
      .slider button { width: 22px; padding-bottom: 2px; border-radius: 4px; background: var(--field); font-weight: 300; }
      .slider .frame { width: 185px; }
      .track { display: flex; height: 36px; border-top: 1px solid #000; }
      .keys { width: 74px; }
      .ruler { flex: 1; overflow: hidden; background: #2a2a2a; }
      text { fill: #c4c4c4; text-anchor: middle; font-size: 18px; }
    `;
  }

  html() {
    let ticks = "";
    let labels = "";
    for (let i = 0; i <= 75; i++) {
      const x = Math.round(9 + i * 19.78);
      ticks += `M${x} 0v${i % 5 ? 17 : 36}`;
      if (i % 5 === 0) labels += `<text x="${x}" y="31" class="half">${i}</text>`;
    }
    return `
      <div class="dots"></div>
      <div class="body">
        <div class="slider">
          <button aria-label="上一帧"><svg width="8" height="12"><path fill="none" stroke="#bbb" d="M7 0 1 6l6 6"/></svg></button>
          <button class="frame half">0 / 100</button>
          <button aria-label="下一帧"><svg width="8" height="12"><path fill="none" stroke="#bbb" d="m1 0 6 6-6 6"/></svg></button>
        </div>
        <div class="track">
          <button class="keys" aria-label="迷你曲线编辑器">${icon("keys", 30)}</button>
          <div class="ruler"><svg width="100%" height="36"><rect x="4" y="1" width="11" height="35" fill="#8a8016"/><path stroke="#777" transform="translate(.5 0)" d="${ticks}"/>${labels}</svg></div>
        </div>
      </div>
    `;
  }
}

class StatusBar extends BaseElement {
  css() {
    return `
      :host { display: flex; height: 82px; padding: 4px 0 0 4px; }
      .script { display: flex; flex-direction: column; gap: 2px; width: 149px; padding-top: 1px; }
      .script input { width: 149px; height: 36px; border: 2px solid #fff; border-top-color: #777; border-left-color: #777; background: #dcc4c4; }
      .script input + input { padding: 0 2px 12px 4px; background: #fff; color: #888; font-family: "Liberation Mono", "Noto Sans CJK SC", monospace; font-weight: 300; }
      .script input::placeholder { color: #888; opacity: 1; }
      hr { width: 1px; height: 76px; margin: 0 5px 0 4px; border: 0; background: #111; }
      .prompt { flex: 0 0 628px; }
      p { margin: 7px 0 14px; }
      .coords { width: 666px; }
      .row { display: flex; align-items: center; height: 38px; }
      .row label { display: flex; align-items: center; gap: 4px; margin-right: 19px; }
      .row label input { width: 87px; height: 26px; padding: 0 0 2px 4px; background: #595959; color: #888; }
      .row svg { margin-right: 6px; }
      .row .half { white-space: nowrap; }
      .row button svg { margin: 0; }
      .tag { justify-content: flex-end; gap: 4px; padding-right: 54px; color: #aaa; }
      .tag button { width: 32px; height: 32px; border-radius: 5px; background: var(--blue); }
      .play { display: flex; flex-direction: column; }
      .play .row button { width: 35px; height: 34px; }
      .play .row input { width: 104px; height: 25px; padding: 0 0 2px 3px; background: var(--field); color: #ccc; }
    `;
  }

  html() {
    return `
      <div class="script"><input aria-label="宏录制器"><input aria-label="侦听器" placeholder="MAXScript 迷你侦听器"></div>
      <hr>
      <div class="prompt"><p class="half">选择了 1 个 对象</p><p>单击并拖动以开始创建过程</p></div>
      <div class="coords">
        <div class="row">
          ${icon("isolate", 34)}${icon("lock", 34)}${icon("absolute", 34)}
          <label class="half">X:<input class="half" value="425.032"></label>
          <label class="half">Y:<input class="half" value="-194.11"></label>
          <label class="half">Z:<input class="half" value="0.0"></label>
          <span class="half">栅格 = 100.0</span>
        </div>
        <div class="row tag"><button aria-label="时间标记">${icon("cube", 28)}</button><span>添加时间标记</span></div>
      </div>
      <div class="play">
        <div class="row"><button aria-label="转至开头">${icon("first")}</button><button aria-label="上一帧">${icon("prev")}</button><button aria-label="播放">${icon("play")}</button><button aria-label="下一帧">${icon("next")}</button></div>
        <div class="row"><button aria-label="关键点模式">${icon("keymode")}</button><input class="half" aria-label="当前帧" value="0"></div>
      </div>
    `;
  }
}

class TaskBar extends BaseElement {
  css() {
    return `
      :host { display: flex; height: 60px; background: #131f25; color: #fff; font-family: var(--font-win); font-weight: 400; }
      .start { width: 72px; background: #0c1e26; }
      .search { display: flex; align-items: center; gap: 13px; width: 516px; padding: 0 14px; background: #f2f2f2; color: #222; }
      .search input { flex: 1; min-width: 0; font-size: 22px; line-height: 32px; }
      .search input::placeholder { color: #222; opacity: 1; }
      .view { width: 74px; margin-right: 9px; }
      .app { justify-content: flex-start; width: 228px; border-bottom: 3px solid #76b9ed; padding: 3px 0 0 8px; gap: 2px; white-space: nowrap; }
      .folder { gap: 7px; }
      .mail { width: 89px; }
      .max { width: 240px; margin-left: 8px; padding-left: 14px; background: #40484b; }
      .ime { display: flex; flex-direction: column; gap: 8px; margin-left: 110px; padding-top: 4px; }
      .ime button { width: 22px; height: 22px; font-size: 20px; line-height: 22px; }
      .ime button:first-child { background: #fff; color: #000; }
    `;
  }

  html() {
    return `
      <button class="start" aria-label="开始">${icon("win", 32)}</button>
      <label class="search">${icon("ring", 32)}<input placeholder="在这里输入你要搜索的内容">${icon("mic", 34)}</label>
      <button class="view" aria-label="任务视图">${icon("taskview", 34)}</button>
      <button class="app folder">${icon("folder", 34)}<span>屏幕截图</span></button>
      <button class="mail" aria-label="邮件">${icon("mail", 36)}</button>
      <button class="app">${icon("edge", 38)}<span>我的经验_个人中心...</span></button>
      <button class="app max">${icon("max", 38)}<span>无标题 - Autodesk...</span></button>
      <div class="ime"><button>拼</button><button aria-label="设置">${icon("gear", 22)}</button></div>
    `;
  }
}

class SiteMark extends BaseElement {
  css() {
    return `
      :host { position: fixed; right: 0; bottom: 0; display: flex; align-items: center; gap: 2px; width: 562px; height: 281px; padding: 0 0 4px 50px; background: #fff; color: #000; font-style: italic; }
      :host::before { content: ""; position: absolute; left: -8px; top: 53px; width: 8px; height: 150px; background: #222; }
      div { display: flex; flex-direction: column; padding-top: 8px; }
      strong { font-size: 61px; font-weight: 900; line-height: 60px; white-space: nowrap; }
      span { font: italic 500 40px/48px "Noto Sans", sans-serif; }
    `;
  }

  html() {
    return `
      <svg width="150" height="124" viewBox="50 77 150 124">
        <path fill="#94c11f" d="M60 131C78 98 118 76 155 79c32 2 50 24 36 52 4-25-10-40-38-39-34 1-66 13-93 39z"/>
        <path fill="#1d449c" d="M59 137c-20 38 2 67 48 61 46-7 83-35 92-70-15 35-52 58-90 60-40 2-60-19-50-51z"/>
        <path fill="#e2e2e6" d="m126 97 25 17v14l-13 7v36l-12 5zM162 128l22 13-22 20z"/>
        <path fill="#1d449c" d="m96 109 26-14v81l-26 2zM138 134l21-11v38l-21 12zM62 149l22-11v37c-12-4-20-12-22-26z"/>
        <path fill="#3d6fc0" d="m100 112 18-8v70l-18 2z" opacity=".6"/>
      </svg>
      <div><strong>土木工程网</strong><span>www.civilcn.com</span></div>
    `;
  }
}

customElements.define("drop-down", DropDown);
customElements.define("title-bar", TitleBar);
customElements.define("menu-bar", MenuBar);
customElements.define("tool-bar", ToolBar);
customElements.define("ribbon-bar", RibbonBar);
customElements.define("layout-strip", LayoutStrip);
customElements.define("view-port", ViewPort);
customElements.define("view-grid", ViewGrid);
customElements.define("roll-out", RollOut);
customElements.define("spin-field", SpinField);
customElements.define("command-panel", CommandPanel);
customElements.define("time-line", TimeLine);
customElements.define("status-bar", StatusBar);
customElements.define("task-bar", TaskBar);
customElements.define("site-mark", SiteMark);
</script>
</body>
</html>
